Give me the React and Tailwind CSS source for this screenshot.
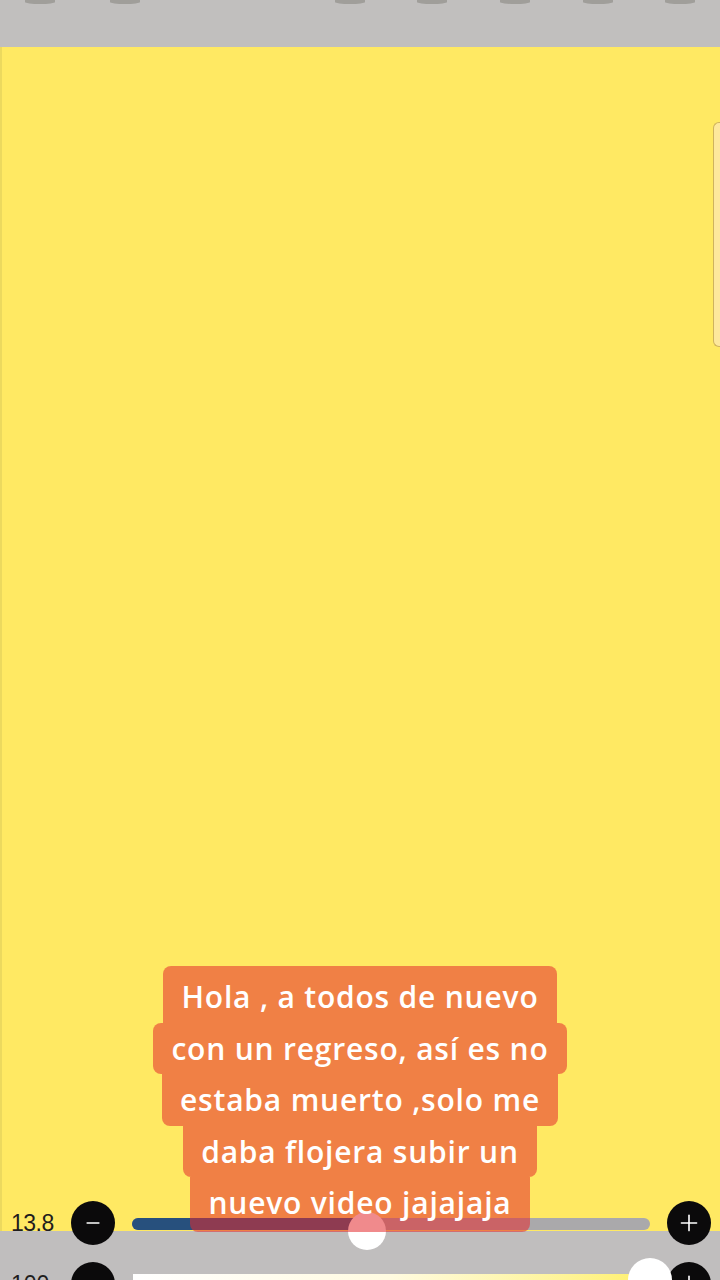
import { Minus, Plus } from 'lucide-react';

const captionLines = [
  { text: 'Hola , a todos de nuevo', round: 'rounded-t-[8px]', pad: 'pt-[5px]' },
  { text: 'con un regreso, así es no', round: 'rounded-[8px]', pad: '' },
  { text: 'estaba muerto ,solo me', round: 'rounded-b-[8px]', pad: '' },
  { text: 'daba flojera subir un', round: 'rounded-b-[8px]', pad: '' },
  { text: 'nuevo video jajajaja', round: 'rounded-b-[8px]', pad: 'pb-[3px]' },
];

const RoundButton = ({ children }) => (
  <div className="w-[44px] h-[44px] shrink-0 rounded-full bg-[#0b0a0b] flex items-center justify-center text-white">
    {children}
  </div>
);

const App = () => {
  return (
    <div className="relative w-[720px] h-[1280px] overflow-hidden bg-[#c0bebe] flex flex-col font-['Liberation_Sans',sans-serif]">
      {/* top toolbar, icons cut off at the top */}
      <div className="h-[47px] shrink-0 bg-[#c1bfbe] flex items-start">
        <span className="ml-[25px] w-[30px] h-[4px] rounded-b-[50%] bg-[#a09e9a]" />
        <span className="ml-[55px] w-[30px] h-[4px] rounded-b-[50%] bg-[#a09e9a]" />
        <span className="ml-[195px] w-[30px] h-[4px] rounded-b-[50%] bg-[#a09e9a]" />
        <span className="ml-[52px] w-[30px] h-[4px] rounded-b-[50%] bg-[#a09e9a]" />
        <span className="ml-[53px] w-[30px] h-[4px] rounded-b-[50%] bg-[#a09e9a]" />
        <span className="ml-[53px] w-[30px] h-[4px] rounded-b-[50%] bg-[#a09e9a]" />
        <span className="ml-[52px] w-[30px] h-[4px] rounded-b-[50%] bg-[#a09e9a]" />
      </div>

      {/* canvas */}
      <div className="h-[1184px] shrink-0 bg-[#ffe963] border-l-[2px] border-[#ecd95e] flex justify-end items-start pt-[75px]">
        <div className="w-[7px] h-[225px] rounded-l-[6px] border border-r-0 border-[#cfb35e] bg-[#fde89c]" />
      </div>

      {/* brush controls */}
      <div className="relative z-10 -mt-[30px] flex flex-col">
        <div className="h-[44px] flex items-center">
          <span className="w-[71px] pl-[11px] text-[23px] text-[#1f1d1d] tracking-[-0.5px]">13.8</span>
          <RoundButton>
            <Minus size={20} strokeWidth={2} />
          </RoundButton>
          <div className="relative flex-1 h-[12px] mx-[17px] mt-[1px] rounded-full bg-[#aaa9ab]">
            <div className="h-full w-[235px] rounded-full bg-[#27507d]" />
            <div className="absolute left-[216px] top-[-6px] w-[38px] h-[38px] rounded-full bg-white" />
          </div>
          <div className="mr-[9px]">
            <RoundButton>
              <Plus size={26} strokeWidth={1.5} />
            </RoundButton>
          </div>
        </div>

        <div className="mt-[17px] h-[44px] flex items-center">
          <span className="w-[71px] pl-[11px] text-[23px] text-[#1f1d1d]">100</span>
          <RoundButton>
            <Minus size={20} strokeWidth={2} />
          </RoundButton>
          <div className="relative flex-1 h-[12px] ml-[18px] mr-[17px] mt-[-8px] bg-gradient-to-r from-white via-[#fffbe0] to-[#fff06a]">
            <div className="absolute right-[-22px] top-[-16px] w-[44px] h-[44px] rounded-full bg-white" />
          </div>
          <div className="mr-[9px]">
            <RoundButton>
              <Plus size={26} strokeWidth={1.5} />
            </RoundButton>
          </div>
        </div>
      </div>

      {/* caption overlay */}
      <div className="absolute z-20 top-[966px] left-0 right-0 flex flex-col items-center font-['Open_Sans',sans-serif] font-semibold text-white text-[30px] tracking-[0.8px]">
        {captionLines.map((line) => (
          <div
            key={line.text}
            className={`px-[18px] leading-[51.5px] whitespace-nowrap bg-[rgba(227,42,45,0.55)] ${line.round} ${line.pad}`}
          >
            {line.text}
          </div>
        ))}
      </div>
    </div>
  );
};

export default App;
